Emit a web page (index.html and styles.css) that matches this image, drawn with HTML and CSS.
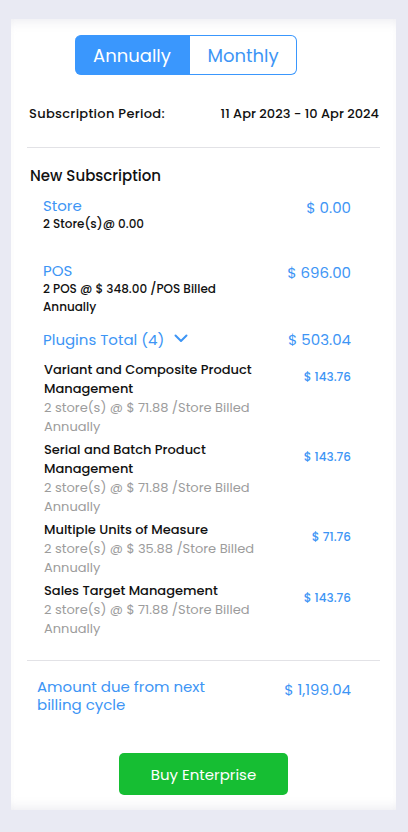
FILE: index.html
```html
<!DOCTYPE html>
<html>
	<head>
		<meta charset="utf-8" />
		<meta name="viewport" content="width=device-width,initial-scale=1" />
		<title>Subscription</title>
		<link rel="stylesheet" href="styles.css">
	</head>
	<body>
		<article class="card">
			<div class="toggle">
				<a class="toggle-btn active" href="javascript:">Annually</a>
				<a class="toggle-btn" href="javascript:">Monthly</a>
			</div>
			<div class="period">
				<span>Subscription Period:</span>
				<span>11 Apr 2023 - 10 Apr 2024</span>
			</div>
			<hr class="line">
			<h3 class="title">New Subscription</h3>
			<div class="items">
				<div class="row">
					<div class="info">
						<p class="name">Store</p>
						<p class="sub">2 Store(s)@ 0.00</p>
					</div>
					<span class="price">$ 0.00</span>
				</div>
				<div class="row pos">
					<div class="info">
						<p class="name">POS</p>
						<p class="sub">2 POS @ $ 348.00 /POS Billed<br>Annually</p>
					</div>
					<span class="price">$ 696.00</span>
				</div>
				<div class="row plugins">
					<p class="name">Plugins Total (4)
						<svg class="chev" width="14" height="9" viewBox="0 0 14 9"><path d="M1.5 1.5 L7 7 L12.5 1.5" fill="none" stroke="#3d95f5" stroke-width="2" stroke-linecap="round" stroke-linejoin="round"/></svg>
					</p>
					<span class="price">$ 503.04</span>
				</div>
				<ul class="plugin-list" id="pluginList"></ul>
			</div>
			<hr class="line bottom">
			<div class="row total">
				<p class="name">Amount due from next<br>billing cycle</p>
				<span class="price">$ 1,199.04</span>
			</div>
			<div class="buy">
				<a class="buy-btn" href="javascript:">Buy Enterprise</a>
			</div>
		</article>
		<script>
			var aPlugins=[
				['Variant and Composite Product Management','2 store(s) @ $ 71.88 /Store Billed Annually','$ 143.76'],
				['Serial and Batch Product Management','2 store(s) @ $ 71.88 /Store Billed Annually','$ 143.76'],
				['Multiple Units of Measure','2 store(s) @ $ 35.88 /Store Billed Annually','$ 71.76'],
				['Sales Target Management','2 store(s) @ $ 71.88 /Store Billed Annually','$ 143.76']
			];
			var sHtml='';
			for(var i=0;i<aPlugins.length;i++){
				sHtml+="<li><div class='info'><p class='p-name'>"+aPlugins[i][0]+"</p><p class='p-sub'>"+aPlugins[i][1]+"</p></div><span class='p-price'>"+aPlugins[i][2]+"</span></li>";
			}
			document.getElementById('pluginList').innerHTML=sHtml;
		</script>
	</body>
</html>
```

FILE: styles.css
```css
*{margin: 0;padding: 0;box-sizing: border-box;}
body{
	background: #e9eaf3;
	font-family: "Poppins", "Inter", "Open Sans", sans-serif;
	color: #111;
}
a{
	text-decoration: none;
}
li{
	list-style: none;
}
.card{
	margin: 19px 12px 22px 11px;
	background: #fff;
	padding: 16px 16px 15px;
	box-shadow: 0 10px 12px -8px rgba(230,230,236,0.8) inset, 0 -10px 12px -8px rgba(230,230,236,0.8) inset;
}
.toggle{
	display: flex;
	margin-left: 48px;
	width: 222px;
	height: 40px;
}
.toggle-btn{
	flex: 1;
	display: flex;
	align-items: center;
	justify-content: center;
	font-size: 18px;
	color: #3d95f5;
	border: 1px solid #3a97fd;
	border-left: none;
	border-radius: 0 6px 6px 0;
}
.toggle-btn.active{
	flex: 0 0 115px;
	background: #3a97fd;
	color: #fff;
	border-radius: 6px 0 0 6px;
}
.period{
	display: flex;
	justify-content: space-between;
	margin: 29px 1px 0 2px;
	font-size: 13px;
	font-weight: 500;
	line-height: 20px;
}
.period span:first-child{
	letter-spacing: 0.3px;
}
.line{
	border: none;
	border-top: 1px solid #e2e2e6;
	margin-top: 23px;
}
.line.bottom{
	margin-top: 22px;
}
.title{
	font-size: 15px;
	font-weight: 500;
	line-height: 20px;
	margin: 18px 0 0 3px;
}
.items{
	padding: 0 29px 0 16px;
	margin-top: 10px;
}
.row{
	display: flex;
	justify-content: space-between;
	align-items: flex-start;
}
.name{
	font-size: 15px;
	line-height: 20px;
	color: #3d95f5;
}
.price{
	font-size: 15px;
	line-height: 20px;
	color: #3d95f5;
	margin-top: 2px;
}
.sub{
	font-size: 12px;
	line-height: 18px;
	font-weight: 500;
	margin-top: -1px;
}
.row.pos{
	margin-top: 28px;
}
.row.plugins{
	margin-top: 14px;
}
.row.plugins .price{
	margin-top: 0;
}
.chev{
	margin-left: 6px;
	vertical-align: 2px;
}
.plugin-list{
	margin-top: 10px;
}
.plugin-list li{
	display: flex;
	justify-content: space-between;
	align-items: flex-start;
	margin-top: 4px;
	padding-left: 1px;
}
.plugin-list li:first-child{
	margin-top: 0;
}
.plugin-list .info{
	width: 215px;
}
.p-name{
	font-size: 13px;
	font-weight: 500;
	line-height: 19px;
	color: #111;
}
.p-sub{
	font-size: 13px;
	line-height: 19px;
	color: #9c9c9c;
}
.p-price{
	font-size: 12px;
	font-weight: 500;
	color: #3d95f5;
	line-height: 19px;
	margin-top: 7px;
}
.row.total{
	margin-top: 17px;
	padding: 0 29px 0 10px;
}
.row.total .name{
	line-height: 18px;
}
.buy{
	display: flex;
	justify-content: center;
	margin-top: 39px;
}
.buy-btn{
	width: 169px;
	height: 42px;
	display: flex;
	align-items: center;
	justify-content: center;
	background: #16be33;
	border-radius: 5px;
	color: #fff;
	font-size: 15px;
}
```
